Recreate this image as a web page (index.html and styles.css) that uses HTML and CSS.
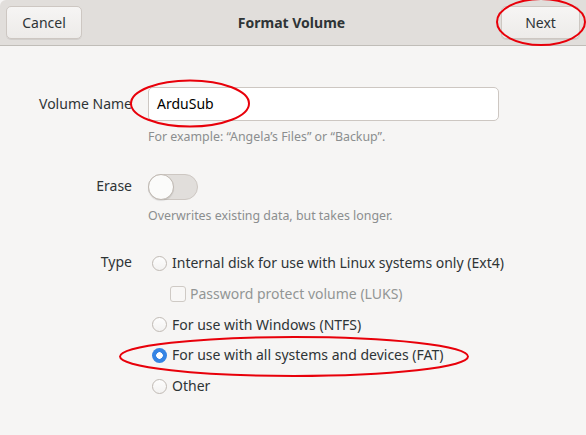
FILE: index.html
```html
<!DOCTYPE html>
<html>
<head>
<meta charset="utf-8">
<link rel="stylesheet" href="styles.css">
</head>
<body>
<div class="window">
  <header class="headerbar">
    <button class="btn">Cancel</button>
    <div class="title">Format Volume</div>
    <button class="btn btn-next">Next</button>
  </header>
  <main class="content">
    <div class="grid">
      <div class="label label-name">Volume Name</div>
      <div class="field">
        <div class="entry">ArduSub</div>
        <div class="hint">For example: “Angela’s Files” or “Backup”.</div>
      </div>

      <div class="label label-erase">Erase</div>
      <div class="field field-erase">
        <div class="switch"><span class="knob"></span></div>
        <div class="hint">Overwrites existing data, but takes longer.</div>
      </div>

      <div class="label label-type">Type</div>
      <div class="field field-type">
        <div class="option"><span class="radio"></span>Internal disk for use with Linux systems only (Ext4)</div>
        <div class="option sub disabled"><span class="check"></span>Password protect volume (LUKS)</div>
        <div class="option"><span class="radio"></span>For use with Windows (NTFS)</div>
        <div class="option"><span class="radio checked"></span>For use with all systems and devices (FAT)</div>
        <div class="option"><span class="radio"></span>Other</div>
      </div>
    </div>
  </main>
  <svg class="marks" width="586" height="435" viewBox="0 0 586 435">
    <ellipse cx="541" cy="22" rx="44" ry="23" />
    <ellipse cx="190" cy="103.5" rx="59" ry="23" />
    <ellipse cx="294" cy="356.5" rx="174" ry="19.5" />
  </svg>
</div>
</body>
</html>
```
FILE: styles.css
```css
* { box-sizing: border-box; }
html, body { margin: 0; padding: 0; }
body {
  width: 586px;
  height: 435px;
  overflow: hidden;
  font-family: "Noto Sans", "Open Sans", sans-serif;
  font-size: 14px;
  color: #2e3436;
  background: #f6f5f4;
}
.window {
  position: relative;
  width: 586px;
  height: 435px;
}
.headerbar {
  height: 46px;
  display: flex;
  align-items: center;
  justify-content: space-between;
  padding: 0 6px 1px 6px;
  background: #e1dedb;
  border-bottom: 1px solid #c0bdb8;
  border-top-left-radius: 6px;
}
.btn {
  font: inherit;
  color: #2e3436;
  height: 33px;
  width: 76px;
  border: 1px solid #cdc7c2;
  border-radius: 5px;
  background: linear-gradient(#f6f5f4, #edebe9);
  box-shadow: 0 1px rgba(0,0,0,0.07);
  padding: 0;
}
.btn-next { width: 79px; }
.title {
  font-weight: bold;
  font-size: 14px;
}
.content {
  padding-top: 41px;
}
.grid {
  display: grid;
  grid-template-columns: 132px 351px;
  column-gap: 16px;
  align-items: start;
}
.label {
  text-align: right;
  line-height: 20px;
}
.label-name { margin-top: 7px; }
.label-erase { margin-top: 31px; }
.label-type { margin-top: 28px; }
.entry {
  height: 34px;
  background: #fff;
  border: 1px solid #cdc7c2;
  border-radius: 5px;
  padding: 0 8px;
  line-height: 32px;
  color: #000;
}
.hint {
  font-size: 12.4px;
  color: #8b8e8f;
  margin-top: 8px;
  line-height: 16px;
}
.field-erase { margin-top: 29px; }
.switch {
  position: relative;
  width: 50px;
  height: 26px;
  border-radius: 13px;
  background: #e1dedb;
  border: 1px solid #cdc7c2;
}
.knob {
  position: absolute;
  left: -1px;
  top: -1px;
  width: 26px;
  height: 26px;
  border-radius: 50%;
  background: #fbfbfa;
  border: 1px solid #bfb8b1;
  box-shadow: 0 1px 1px rgba(0,0,0,0.1);
}
.field-type { margin-top: 29px; }
.option {
  display: flex;
  align-items: center;
  height: 20px;
  margin-bottom: 10.75px;
  line-height: 20px;
  white-space: nowrap;
}
.option.sub { padding-left: 22px; }
.option.disabled { color: #929595; }
.radio {
  width: 15px;
  height: 15px;
  border-radius: 50%;
  border: 1px solid #c0bab4;
  background: linear-gradient(#fdfdfd, #f3f2f1);
  margin: 0 5px 0 4px;
  flex: none;
}
.radio.checked {
  border: none;
  background: radial-gradient(circle, #fff 0 3px, #3584e4 3.5px);
}
.check {
  width: 16px;
  height: 16px;
  border-radius: 3px;
  border: 1px solid #cfcac5;
  background: #f8f7f6;
  margin: 0 4px 0 0;
  flex: none;
}
.marks {
  position: absolute;
  left: 0;
  top: 0;
  pointer-events: none;
}
.marks ellipse {
  fill: none;
  stroke: #e8000a;
  stroke-width: 2;
}
```
